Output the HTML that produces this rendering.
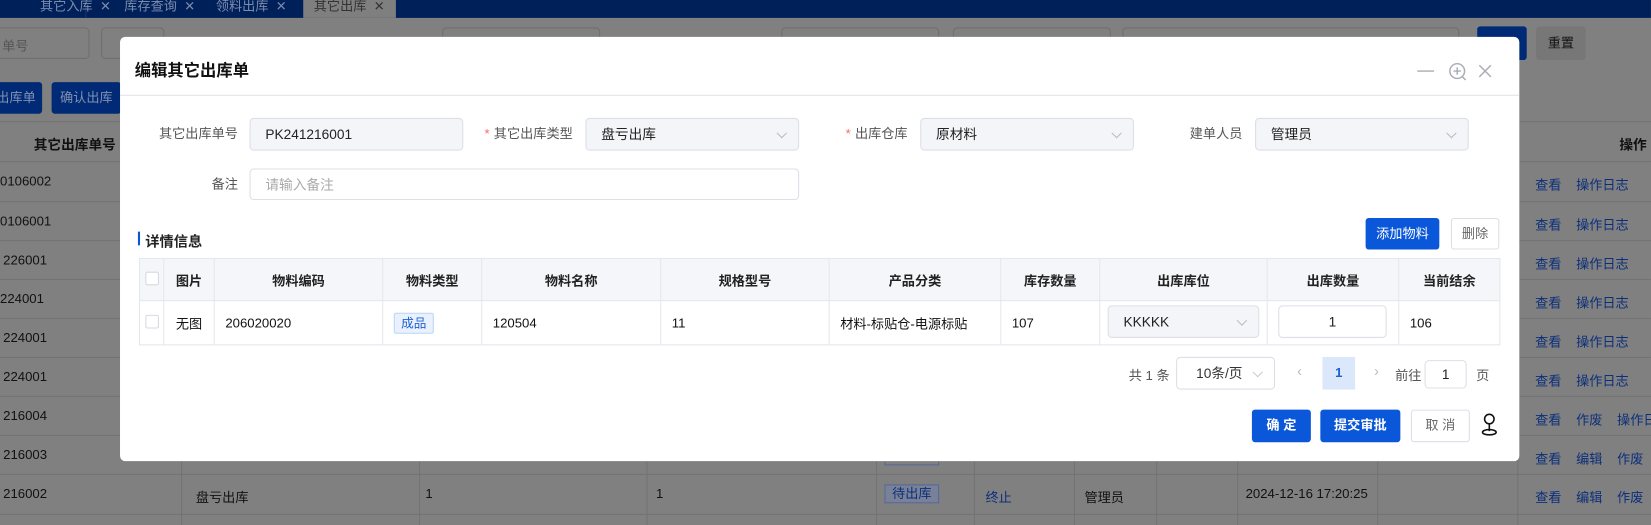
<!DOCTYPE html>
<html><head><meta charset="utf-8"><style>
*{box-sizing:border-box;margin:0;padding:0}
html,body{width:1651px;height:525px;overflow:hidden;background:#808080}
#w{position:absolute;left:0;top:0;width:1568px;height:499px;transform:scale(1.0529);transform-origin:0 0;font-family:"Liberation Sans","Noto Sans CJK SC",sans-serif;font-size:12.5px;color:#111}
.a{position:absolute}
.bl{position:absolute;background:#737373}
.lk{color:#0c2f7a}
.inp{position:absolute;border:1px solid #dcdfe6;border-radius:4px;background:#f4f5f8;height:31px;line-height:29px;padding-left:14px;font-size:13px;color:#222}
.chev{position:absolute;right:12px;top:10px;width:7px;height:7px;border-right:1px solid #b8bcc4;border-bottom:1px solid #b8bcc4;transform:rotate(45deg)}
.lab{position:absolute;text-align:right;font-size:12.5px;color:#555;line-height:31px}
.req{color:#f56c6c;margin-right:4px}
table{border-collapse:collapse;position:absolute;left:132px;top:245px;width:1292px;table-layout:fixed}
td,th{border:1px solid #e4e7ed;font-size:12.5px}
th{background:#f4f6f9;height:40px;font-weight:bold;color:#222}
td{height:42px;padding-left:10px}
.cb{display:inline-block;width:13px;height:13px;border:1px solid #d6d9e0;border-radius:2px;background:#fff}
.btn{position:absolute;border-radius:3px;text-align:center;font-size:12.5px}
</style></head><body><div id="w">
<!-- background -->
<div class="a" style="left:0;top:0;width:1568px;height:17px;background:#00205a"></div>
<div class="a" style="left:0;top:0;width:82px;height:17px;border-right:1px solid #1a3570"></div>
<div class="a" style="left:38px;top:-5px;color:#7a8bad;font-size:12.5px">其它入库 &nbsp;✕</div>
<div class="a" style="left:118px;top:-5px;color:#7a8bad;font-size:12.5px">库存查询 &nbsp;✕</div>
<div class="a" style="left:205px;top:-5px;color:#7a8bad;font-size:12.5px">领料出库 &nbsp;✕</div>
<div class="a" style="left:288px;top:0;width:88px;height:17px;background:#7f7f7f"></div>
<div class="a" style="left:298px;top:-5px;color:#333;font-size:12.5px">其它出库 &nbsp;✕</div>
<div class="a" style="left:-5px;top:26px;width:90px;height:30px;border:1px solid #6e6e6e;border-radius:4px"></div>
<div class="a" style="left:2px;top:33px;color:#555">单号</div>
<div class="a" style="left:96px;top:26px;width:60px;height:30px;border:1px solid #6e6e6e;border-radius:4px"></div>
<div class="a" style="left:420px;top:26px;width:150px;height:30px;border:1px solid #6e6e6e;border-radius:4px"></div>
<div class="a" style="left:742px;top:26px;width:150px;height:30px;border:1px solid #6e6e6e;border-radius:4px"></div>
<div class="a" style="left:905px;top:26px;width:150px;height:30px;border:1px solid #6e6e6e;border-radius:4px"></div>
<div class="a" style="left:1066px;top:26px;width:320px;height:30px;border:1px solid #6e6e6e;border-radius:4px"></div>
<div class="a" style="left:1403px;top:25px;width:47px;height:32px;background:#002a75;border-radius:3px"></div>
<div class="a" style="left:1459px;top:25px;width:47px;height:32px;background:#777;border-radius:3px;text-align:center;line-height:32px;color:#111">重置</div>
<div class="a" style="left:-5px;top:78px;width:45px;height:30px;background:#002a75;border-radius:3px;color:#8090b0;line-height:30px;text-align:right;padding-right:6px">出库单</div>
<div class="a" style="left:49px;top:78px;width:66px;height:30px;background:#002a75;border-radius:3px;color:#8090b0;line-height:30px;text-align:center">确认出库</div>
<div class="bl" style="left:0;top:115px;width:1568px;height:1px"></div>
<div class="a" style="left:32px;top:127px;font-weight:bold;font-size:13px">其它出库单号</div>
<div class="a" style="left:1538px;top:127px;font-weight:bold;font-size:13px">操作</div>
<div class="bl" style="left:0;top:153px;width:1568px;height:1px"></div>
<div class="bl" style="left:0;top:191px;width:1568px;height:1px"></div>
<div class="bl" style="left:0;top:228px;width:1568px;height:1px"></div>
<div class="bl" style="left:0;top:265px;width:1568px;height:1px"></div>
<div class="bl" style="left:0;top:302px;width:1568px;height:1px"></div>
<div class="bl" style="left:0;top:339px;width:1568px;height:1px"></div>
<div class="bl" style="left:0;top:376px;width:1568px;height:1px"></div>
<div class="bl" style="left:0;top:413px;width:1568px;height:1px"></div>
<div class="bl" style="left:0;top:450px;width:1568px;height:1px"></div>
<div class="bl" style="left:0;top:488px;width:1568px;height:1px"></div>
<div class="bl" style="left:172px;top:438px;width:1px;height:61px"></div>
<div class="bl" style="left:398px;top:438px;width:1px;height:61px"></div>
<div class="bl" style="left:614px;top:438px;width:1px;height:61px"></div>
<div class="bl" style="left:832px;top:438px;width:1px;height:61px"></div>
<div class="bl" style="left:925px;top:438px;width:1px;height:61px"></div>
<div class="bl" style="left:1020px;top:438px;width:1px;height:61px"></div>
<div class="bl" style="left:1098px;top:438px;width:1px;height:61px"></div>
<div class="bl" style="left:1175px;top:438px;width:1px;height:61px"></div>
<div class="bl" style="left:1308px;top:438px;width:1px;height:61px"></div>
<div class="bl" style="left:1441px;top:115px;width:1px;height:384px"></div>
<div class="a" style="left:0;top:165px">0106002</div>
<div class="a" style="left:0;top:203px">0106001</div>
<div class="a" style="left:3px;top:240px">226001</div>
<div class="a" style="left:0;top:277px">224001</div>
<div class="a" style="left:3px;top:314px">224001</div>
<div class="a" style="left:3px;top:351px">224001</div>
<div class="a" style="left:3px;top:388px">216004</div>
<div class="a" style="left:3px;top:425px">216003</div>
<div class="a" style="left:3px;top:462px">216002</div>
<div class="a" style="left:186px;top:462px">盘亏出库</div>
<div class="a" style="left:404px;top:462px">1</div>
<div class="a" style="left:623px;top:462px">1</div>
<div class="a" style="left:840px;top:460px;width:52px;height:18px;border:1px solid #566a96;background:#788198;text-align:center;line-height:16px;color:#0c2f7a">待出库</div>
<div class="a lk" style="left:936px;top:462px">终止</div>
<div class="a" style="left:1030px;top:462px">管理员</div>
<div class="a" style="left:1183px;top:462px">2024-12-16 17:20:25</div>
<div class="a" style="left:840px;top:438px;width:52px;height:4px;border:1px solid #566a96;border-top:none"></div>
<div class="a lk" style="left:1458px;top:165px">查看 &nbsp;&nbsp;&nbsp;操作日志</div>
<div class="a lk" style="left:1458px;top:203px">查看 &nbsp;&nbsp;&nbsp;操作日志</div>
<div class="a lk" style="left:1458px;top:240px">查看 &nbsp;&nbsp;&nbsp;操作日志</div>
<div class="a lk" style="left:1458px;top:277px">查看 &nbsp;&nbsp;&nbsp;操作日志</div>
<div class="a lk" style="left:1458px;top:314px">查看 &nbsp;&nbsp;&nbsp;操作日志</div>
<div class="a lk" style="left:1458px;top:351px">查看 &nbsp;&nbsp;&nbsp;操作日志</div>
<div class="a lk" style="left:1458px;top:388px;white-space:nowrap">查看 &nbsp;&nbsp;&nbsp;作废 &nbsp;&nbsp;&nbsp;操作日志</div>
<div class="a lk" style="left:1458px;top:425px;white-space:nowrap">查看 &nbsp;&nbsp;&nbsp;编辑 &nbsp;&nbsp;&nbsp;作废</div>
<div class="a lk" style="left:1458px;top:462px;white-space:nowrap">查看 &nbsp;&nbsp;&nbsp;编辑 &nbsp;&nbsp;&nbsp;作废</div>

<!-- modal -->
<div class="a" style="left:114px;top:35px;width:1329px;height:403px;background:#fff;border-radius:5px">
<div class="a" style="left:14px;top:20px;font-size:15.5px;font-weight:bold;color:#111">编辑其它出库单</div>
<svg class="a" style="left:1230px;top:24px" width="90" height="18" viewBox="0 0 90 18" fill="none" stroke="#a8acb4" stroke-width="1.4">
<path d="M2 8.5H18"/><circle cx="40" cy="8.5" r="7"/><path d="M40 5v7M36.5 8.5h7M45 14l3 3"/><path d="M61 3l11 11M72 3L61 14"/></svg>
<div class="a" style="left:0;top:55px;width:1329px;height:1px;background:#e0e2e7"></div>
</div>
<div class="lab" style="left:120px;top:112px;width:106px">其它出库单号</div>
<div class="inp" style="left:237px;top:112px;width:203px">PK241216001</div>
<div class="lab" style="left:440px;top:112px;width:104px"><span class="req">*</span>其它出库类型</div>
<div class="inp" style="left:556px;top:112px;width:203px">盘亏出库<i class="chev"></i></div>
<div class="lab" style="left:760px;top:112px;width:102px"><span class="req">*</span>出库仓库</div>
<div class="inp" style="left:874px;top:112px;width:203px">原材料<i class="chev"></i></div>
<div class="lab" style="left:1080px;top:112px;width:100px">建单人员</div>
<div class="inp" style="left:1192px;top:112px;width:203px">管理员<i class="chev"></i></div>
<div class="lab" style="left:120px;top:160px;width:106px">备注</div>
<div class="inp" style="left:237px;top:160px;width:522px;height:30px;background:#fff;color:#aaa">请输入备注</div>
<div class="a" style="left:131px;top:220px;width:2px;height:13px;background:#0b57d9"></div>
<div class="a" style="left:138px;top:218px;font-size:13.5px;font-weight:bold;color:#222">详情信息</div>
<div class="btn" style="left:1297px;top:207px;width:70px;height:30px;background:#0b57d9;color:#fff;line-height:30px">添加物料</div>
<div class="btn" style="left:1378px;top:207px;width:46px;height:30px;border:1px solid #dcdfe6;color:#666;line-height:28px">删除</div>
<table>
<colgroup><col style="width:23px"><col style="width:48px"><col style="width:160px"><col style="width:94px"><col style="width:170px"><col style="width:160px"><col style="width:163px"><col style="width:94px"><col style="width:159px"><col style="width:125px"><col style="width:96px"></colgroup>
<tr><th style="padding:0;text-align:center"><span class="cb"></span></th><th>图片</th><th>物料编码</th><th>物料类型</th><th>物料名称</th><th>规格型号</th><th>产品分类</th><th>库存数量</th><th>出库库位</th><th>出库数量</th><th>当前结余</th></tr>
<tr><td style="padding:0;text-align:center"><span class="cb"></span></td><td style="padding:0;text-align:center">无图</td><td>206020020</td><td><span style="display:inline-block;border:1px solid #bcd4f6;background:#e8f1fd;color:#1d5fd1;padding:0 6px;line-height:18px;border-radius:2px;font-size:12px">成品</span></td><td>120504</td><td>11</td><td>材料-标贴仓-电源标贴</td><td>107</td><td style="position:relative"></td><td></td><td>106</td></tr>
</table>
<div class="inp" style="left:1052px;top:290px;width:144px;height:31px">KKKKK<i class="chev"></i></div>
<div class="inp" style="left:1214px;top:290px;width:103px;height:31px;background:#fff;padding:0;text-align:center">1</div>
<div class="a" style="left:1072px;top:346px;color:#555;font-size:12.5px">共 1 条</div>
<div class="inp" style="left:1117px;top:339px;width:94px;height:31px;background:#fff;color:#333;padding-left:18px">10条/页<i class="chev" style="border-color:#ccc"></i></div>
<div class="a" style="left:1232px;top:344px;color:#bbb;font-size:14px">‹</div>
<div class="a" style="left:1256px;top:339px;width:31px;height:31px;background:#dbe7fb;color:#1d5fd1;text-align:center;line-height:31px;font-weight:bold">1</div>
<div class="a" style="left:1305px;top:344px;color:#bbb;font-size:14px">›</div>
<div class="a" style="left:1325px;top:346px;color:#555">前往</div>
<div class="inp" style="left:1353px;top:342px;width:40px;height:27px;line-height:25px;background:#fff;padding:0;text-align:center">1</div>
<div class="a" style="left:1402px;top:346px;color:#555">页</div>
<div class="btn" style="left:1189px;top:389px;width:56px;height:31px;background:#0b57d9;color:#fff;line-height:31px;font-weight:bold">确 定</div>
<div class="btn" style="left:1254px;top:389px;width:76px;height:31px;background:#0b57d9;color:#fff;line-height:31px;font-weight:bold">提交审批</div>
<div class="btn" style="left:1340px;top:389px;width:56px;height:31px;border:1px solid #dcdfe6;color:#666;line-height:29px">取 消</div>
<svg class="a" style="left:1406px;top:392px" width="17" height="24" viewBox="0 0 17 24" fill="none" stroke="#111" stroke-width="1.5"><circle cx="8.5" cy="6" r="4.5"/><path d="M8.5 10.5v7"/><ellipse cx="8.5" cy="18.5" rx="6.5" ry="2.5"/></svg>
</div></body></html>
